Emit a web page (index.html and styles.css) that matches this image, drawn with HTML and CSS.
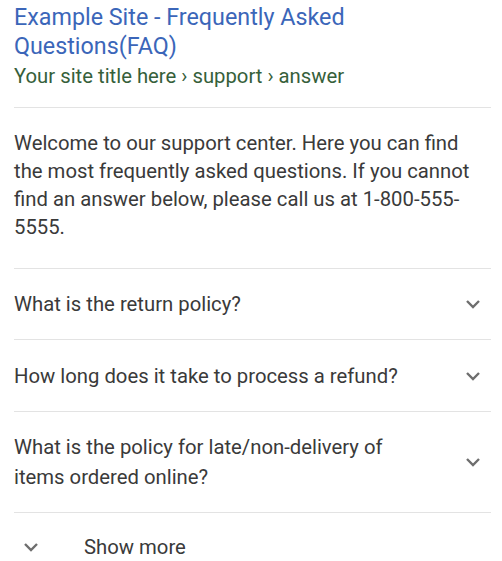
FILE: index.html
```html
<!DOCTYPE html>
<html>
<head>
<meta charset="utf-8">
<link rel="stylesheet" href="styles.css">
</head>
<body>
<div class="result">
  <header class="head">
    <a class="title">Example Site - Frequently Asked Questions(FAQ)</a>
    <div class="crumb">Your site title here › support › answer</div>
  </header>
  <p class="intro">Welcome to our support center. Here you can find the most frequently asked questions. If you cannot find an answer below, please call us at 1-800-555-5555.</p>
  <div class="faq">
    <div class="row"><span class="q">What is the return policy?</span><svg class="chev" viewBox="0 0 16 10"><path d="M2 2 L8 8 L14 2"/></svg></div>
    <div class="row"><span class="q">How long does it take to process a refund?</span><svg class="chev" viewBox="0 0 16 10"><path d="M2 2 L8 8 L14 2"/></svg></div>
    <div class="row"><span class="q narrow">What is the policy for late/non-delivery of items ordered online?</span><svg class="chev" viewBox="0 0 16 10"><path d="M2 2 L8 8 L14 2"/></svg></div>
  </div>
  <div class="more"><svg class="chev" viewBox="0 0 16 10"><path d="M2 2 L8 8 L14 2"/></svg><span>Show more</span></div>
</div>
</body>
</html>
```
FILE: styles.css
```css
html, body { margin: 0; padding: 0; background: #fff; }
body { font-family: Roboto, "Liberation Sans", Arial, sans-serif; color: #3a3a3a; }
.result { padding: 3px 11px 0 14px; }
.head { padding-bottom: 18px; border-bottom: 1px solid #e3e3e3; }
.title { display: block; font-size: 23.3px; line-height: 29px; color: #3b66b9; text-decoration: none; }
.title { max-width: 400px; }
.crumb { font-size: 20.3px; line-height: 26px; margin-top: 2px; color: #36603a; }
.intro { margin: 0; padding: 21px 0 27px; font-size: 20.3px; line-height: 28px; border-bottom: 1px solid #e3e3e3; }
.row { display: flex; align-items: center; justify-content: space-between; padding: 20px 0; border-bottom: 1px solid #e3e3e3; }
.row:nth-child(2) { padding-top: 21px; }
.q { font-size: 20.3px; line-height: 30px; }
.q.narrow { max-width: 400px; }
.chev { width: 16px; height: 10px; flex: none; margin-right: 10px; fill: none; stroke: #6e6e6e; stroke-width: 2.4; }
.more { display: flex; align-items: center; height: 70px; margin-top: -1px; }
.more .chev { margin: 0 45px 0 9px; }
.more span { font-size: 20.3px; line-height: 30px; }
```
